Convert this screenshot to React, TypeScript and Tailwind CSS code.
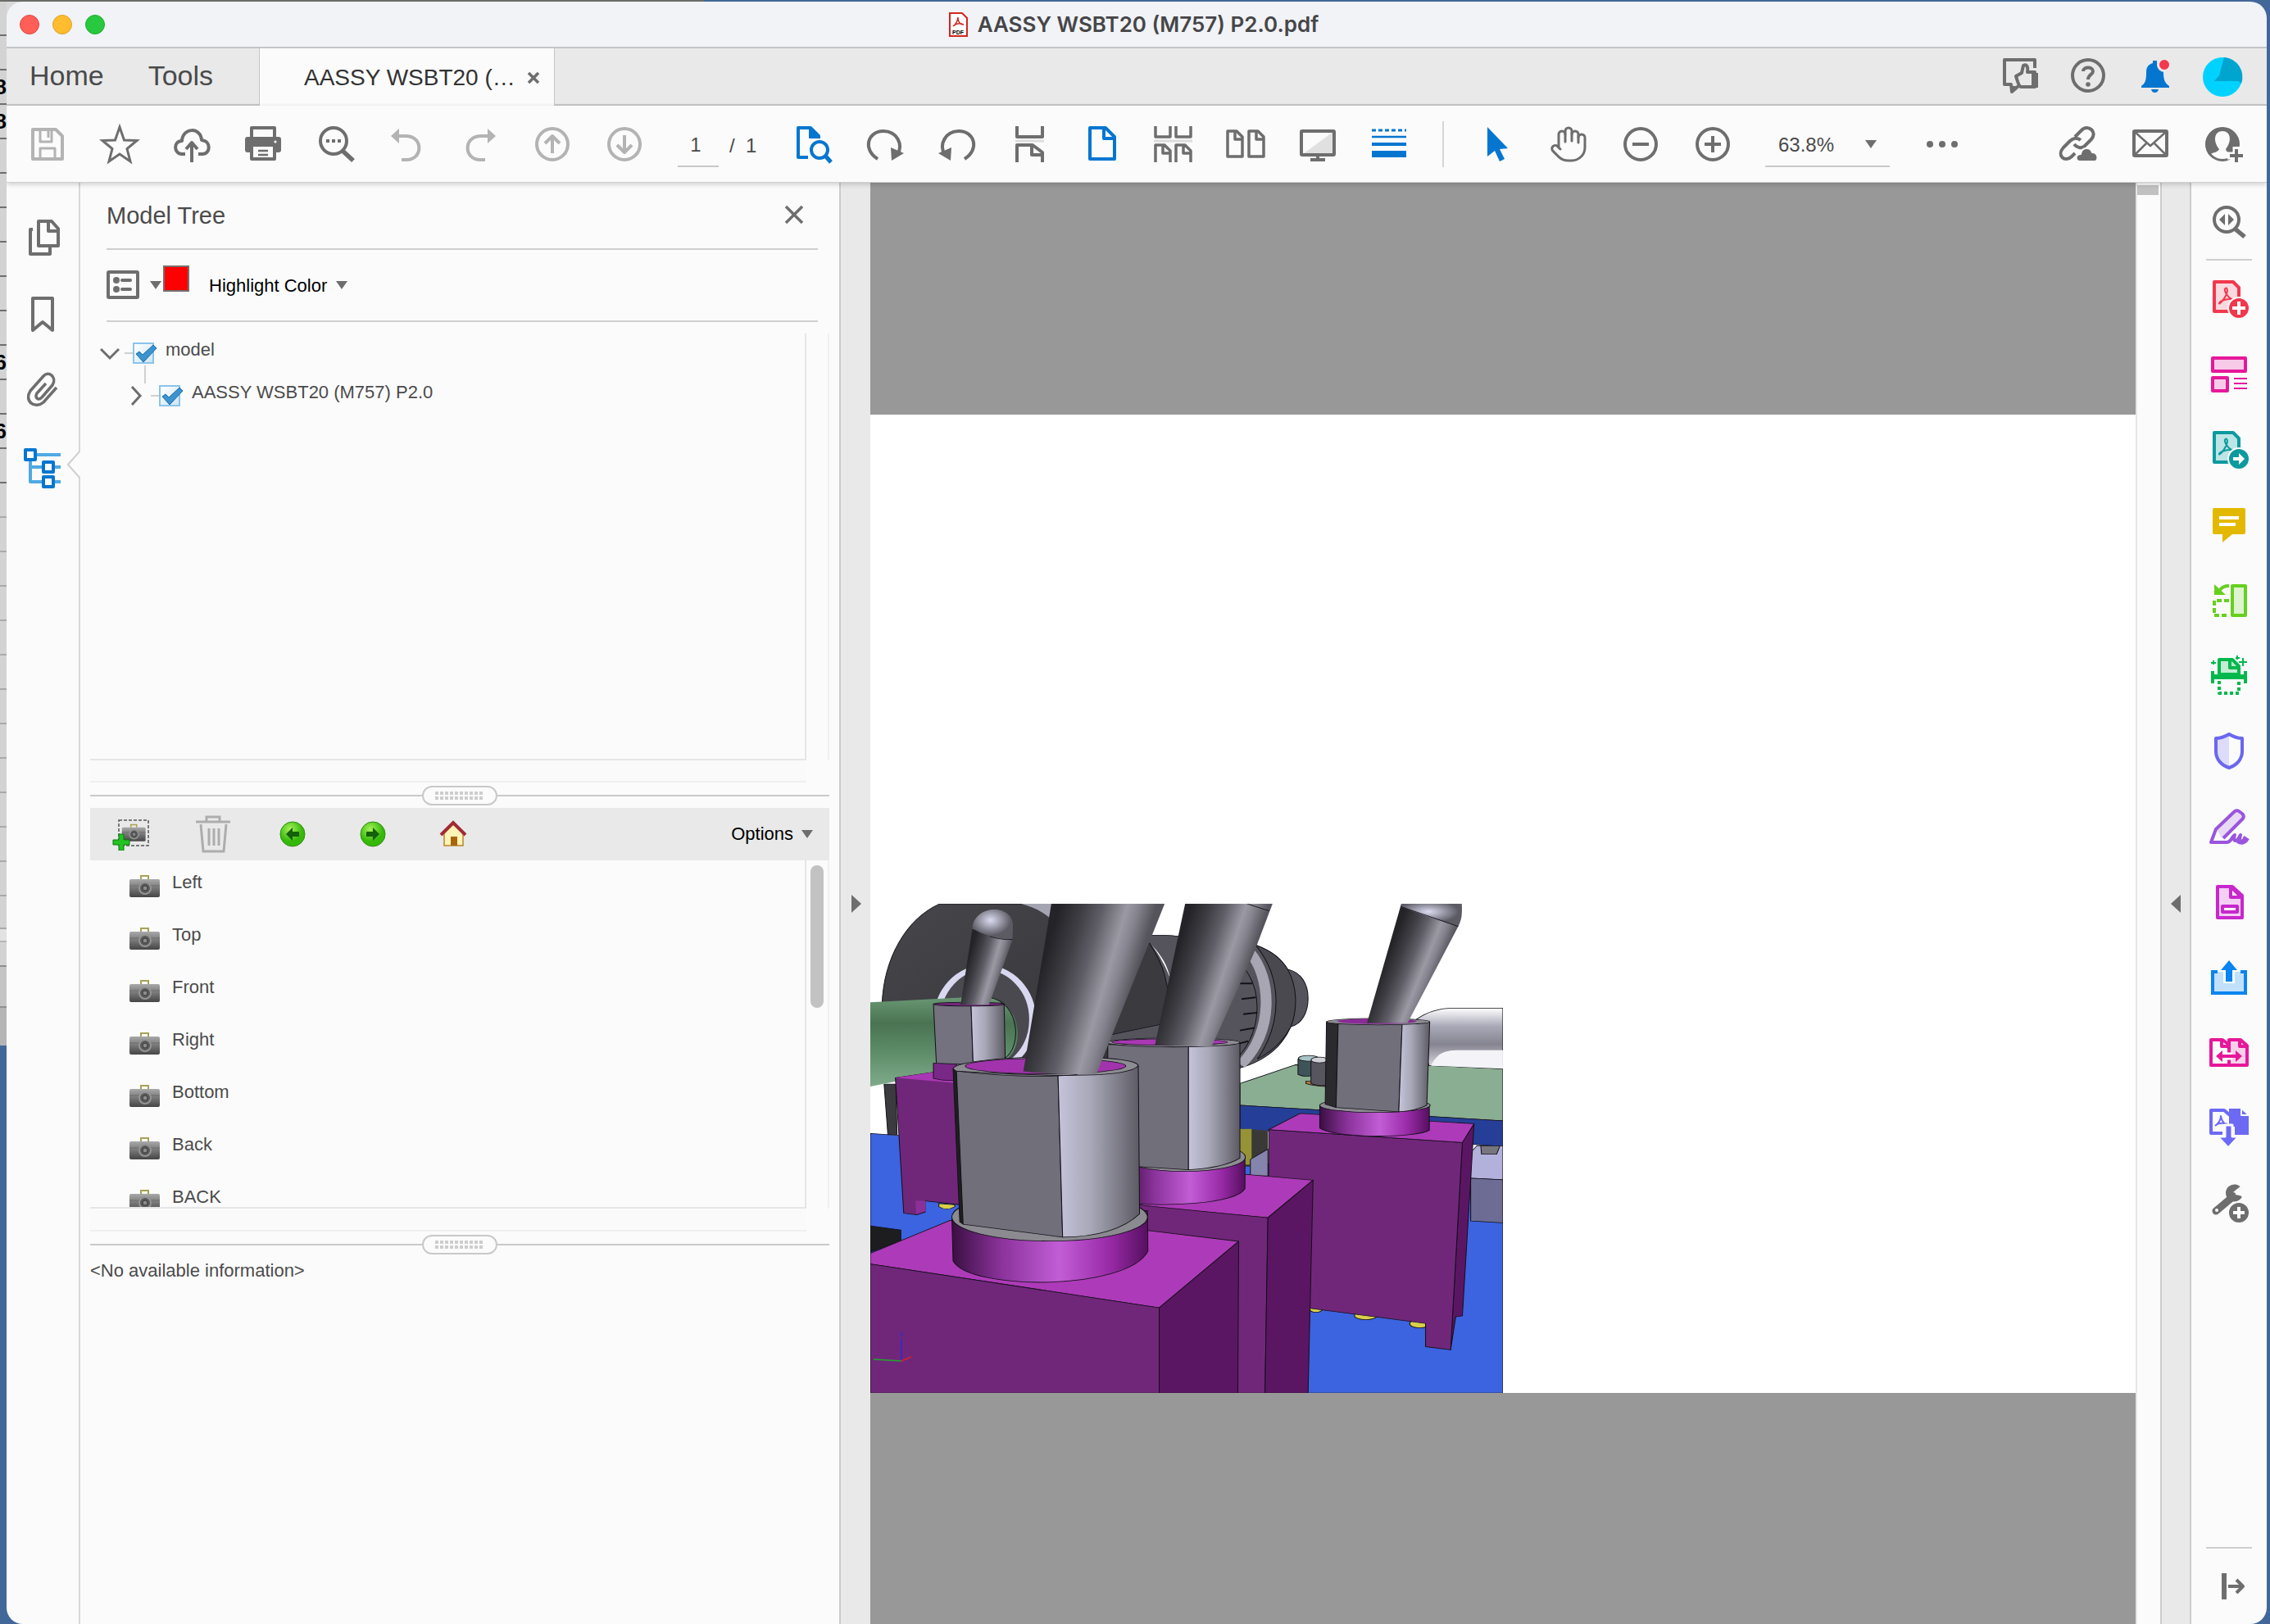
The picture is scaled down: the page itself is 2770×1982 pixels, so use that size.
import type { ReactNode } from "react";
import { Hand } from "lucide-react";

const GRAY = "#6e6e6e";
const MUTED = "#b3b3b3";
const BLUE = "#0576d0";

type IconProps = {
  children: ReactNode;
  color?: string;
  width?: number;
};

function Icon({ children, color = GRAY, width = 4 }: IconProps) {
  return (
    <svg
      viewBox="0 0 48 48"
      className="size-12 shrink-0 overflow-visible"
      fill="none"
      stroke={color}
      strokeWidth={width}
      strokeLinejoin="round"
      aria-hidden="true"
    >
      {children}
    </svg>
  );
}

function Caret() {
  return (
    <svg viewBox="0 0 14 10" className="h-[10px] w-[14px] shrink-0" aria-hidden="true">
      <path d="M0 0H14L7 10z" fill={GRAY} />
    </svg>
  );
}

const acrobatMark =
  "M11 30c4-3 9-10 10-16 0-5-4-4-3 0 1 5 7 11 13 12M11 30c-1-3 8-7 18-6";

const fileTools = [
  {
    label: "Save",
    icon: (
      <Icon color={MUTED}>
        <path d="M6 6H34L42 14V42H6z" />
        <path d="M15 6V21H29V6M15 42V29H33V42" strokeWidth="3" />
        <path d="M25 8V16" strokeWidth="3" />
      </Icon>
    ),
  },
  {
    label: "Star this file",
    icon: (
      <Icon width={3}>
        <path
          d="M24 3L29.5 19L45 19.5L33 29.5L37 45L24 36L11 45L15 29.5L3 19.5L18.5 19z"
          strokeLinejoin="miter"
        />
      </Icon>
    ),
  },
  {
    label: "Upload to cloud",
    icon: (
      <Icon>
        <path d="M16 36H12C2 36 1 20 12 20C13 3 35 3 36 19C48 20 47 36 37 36H32" />
        <path d="M24 46V23M17 30L24 22L31 30" />
      </Icon>
    ),
  },
  {
    label: "Print",
    icon: (
      <Icon>
        <rect x="1" y="15" width="44" height="19" rx="3" fill={GRAY} stroke="none" />
        <rect x="9" y="4" width="28" height="13" fill="#fbfbfb" />
        <rect x="9" y="25" width="28" height="17" fill="#fbfbfb" />
        <path d="M17 32H29M17 37H29" strokeWidth="2.5" />
        <circle cx="38" cy="21" r="1.6" fill="#fbfbfb" stroke="none" />
      </Icon>
    ),
  },
  {
    label: "Find text",
    icon: (
      <Icon>
        <circle cx="21" cy="20" r="16" />
        <path d="M32 32L45 44" strokeWidth="5.5" />
        <path d="M12 20h4M19 20h4M26 20h4" />
      </Icon>
    ),
  },
  {
    label: "Undo",
    icon: (
      <Icon color={MUTED}>
        <path d="M12 14H22C43 15 42 43 22 43H16" />
        <path d="M3 14L13 5V23z" fill={MUTED} stroke="none" />
      </Icon>
    ),
  },
  {
    label: "Redo",
    icon: (
      <Icon color={MUTED}>
        <path d="M35 14H24C3 15 4 43 24 43H30" />
        <path d="M43 14L33 5V23z" fill={MUTED} stroke="none" />
      </Icon>
    ),
  },
  {
    label: "Previous page",
    icon: (
      <Icon color={MUTED}>
        <circle cx="24" cy="24" r="19" />
        <path d="M24 35V14M15 23L24 14L33 23" />
      </Icon>
    ),
  },
  {
    label: "Next page",
    icon: (
      <Icon color={MUTED}>
        <circle cx="24" cy="24" r="19" />
        <path d="M24 13V34M15 25L24 34L33 25" />
      </Icon>
    ),
  },
];

const viewTools = [
  {
    label: "Find in page",
    icon: (
      <Icon color={BLUE}>
        <path d="M18 40H6V4H21L31 14V17" />
        <path d="M20 4V16H32z" fill={BLUE} strokeWidth="2" />
        <circle cx="32" cy="31" r="10" />
        <path d="M39 38L46 46" strokeWidth="5" />
      </Icon>
    ),
  },
  {
    label: "Rotate clockwise",
    icon: (
      <Icon>
        <path d="M15 42C-4 30 3 8 22 8C38 8 47 24 39 37" />
        <path d="M47 35L32 44L31 28z" fill={GRAY} stroke="none" />
      </Icon>
    ),
  },
  {
    label: "Rotate counterclockwise",
    icon: (
      <Icon>
        <path d="M33 42C52 30 45 8 26 8C10 8 1 24 9 37" />
        <path d="M1 35L16 44L17 28z" fill={GRAY} stroke="none" />
      </Icon>
    ),
  },
  {
    label: "Fit width scrolling",
    icon: (
      <Icon>
        <path d="M9 2V15H40V2M9 46V25H28L40 34V46M27 25V37H40" />
        <path d="M7 20H42" stroke="#dcdcdc" strokeWidth="3" />
      </Icon>
    ),
  },
  {
    label: "Single page view",
    icon: (
      <Icon color={BLUE}>
        <path d="M10 4H29L40 15V42H10z" />
        <path d="M27 5V17H39" />
      </Icon>
    ),
  },
  {
    label: "Two page scrolling",
    icon: (
      <Icon width={3.5}>
        <path d="M2 2V15H20V2M27 2V15H45V2" />
        <path d="M2 46V25H13L20 32V46M11 25V35H20M27 46V25H38L45 32V46M36 25V35H45" />
        <path d="M0 20H47" stroke="#dcdcdc" strokeWidth="3" />
      </Icon>
    ),
  },
  {
    label: "Two page view",
    icon: (
      <Icon width={3.5}>
        <path d="M2 8H13L20 15V39H2zM28 8H39L46 15V39H28z" />
        <path d="M11 8V18H20M37 8V18H46" />
      </Icon>
    ),
  },
  {
    label: "Read mode",
    icon: (
      <Icon>
        <path d="M44 8V36H6z" fill="#e0e0e0" stroke="none" />
        <rect x="4" y="8" width="40" height="29" rx="1" />
        <path d="M24 38V42M15 43H33" />
      </Icon>
    ),
  },
  {
    label: "Line weights",
    icon: (
      <Icon color={BLUE}>
        <path d="M2 7H44" strokeWidth="3" strokeDasharray="5 3" />
        <path d="M2 15H44" strokeWidth="2.5" />
        <path d="M2 24H44" />
        <path d="M2 36H44" strokeWidth="8" />
      </Icon>
    ),
  },
];

const pointerTools = [
  {
    label: "Select",
    icon: (
      <Icon color={BLUE}>
        <path
          d="M13 3L38 29L28 30L34 42L28 45L22 32L13 39z"
          fill={BLUE}
          stroke="none"
        />
      </Icon>
    ),
  },
  {
    label: "Pan",
    icon: <Hand className="size-12" color={GRAY} strokeWidth={1.5} aria-hidden="true" />,
  },
  {
    label: "Zoom out",
    icon: (
      <Icon>
        <circle cx="24" cy="24" r="19" />
        <path d="M14 24H34" />
      </Icon>
    ),
  },
  {
    label: "Zoom in",
    icon: (
      <Icon>
        <circle cx="24" cy="24" r="19" />
        <path d="M14 24H34M24 14V34" />
      </Icon>
    ),
  },
];

const shareTools = [
  {
    label: "Share link",
    icon: (
      <Icon>
        <path d="M20 15L28 7C36 -1 48 9 40 18L32 26C28 30 22 28 19 24" strokeLinecap="butt" />
        <path d="M27 19C22 15 17 17 14 20L6 28C-3 38 8 47 16 39L20 35" />
        <path
          d="M26 45C20 45 20 36 27 36C28 27 39 27 41 34C49 34 49 45 44 45z"
          fill={GRAY}
          stroke="#fbfbfb"
          strokeWidth="2"
        />
      </Icon>
    ),
  },
  {
    label: "Send by email",
    icon: (
      <Icon>
        <rect x="4" y="8" width="40" height="30" rx="1" />
        <path d="M5 9L24 26L43 9M5 37L19 23M43 37L29 23" strokeWidth="2.5" />
      </Icon>
    ),
  },
  {
    label: "Invite people",
    icon: (
      <Icon>
        <circle cx="24" cy="24" r="19.5" strokeWidth="3" />
        <path
          d="M24 3.500A20.500 20.500 0 0 0 8 37C11 34 19 34 20 30C12 20 14 8 24 8S36 20 28 30C29 34 31 34 34 35L43 30A20.500 20.500 0 0 0 24 3.500z"
          fill={GRAY}
          stroke="none"
        />
        <path d="M41 27V49M30 38H52" stroke="#fbfbfb" strokeWidth="9" />
        <path d="M41 30V46M33 38H49" />
      </Icon>
    ),
  },
];

const sideTools = [
  {
    label: "Create PDF",
    icon: (
      <Icon color="#f1384e">
        <path d="M5 3H28L35 10V39H5z" fill="#fad9de" />
        <path d={acrobatMark} strokeWidth="2" />
        <circle cx="35" cy="35" r="13" fill="#f1384e" stroke="#fbfbfb" strokeWidth="2" />
        <path d="M35 27V43M27 35H43" stroke="#fff" />
      </Icon>
    ),
  },
  {
    label: "Organize Pages",
    icon: (
      <Icon color="#e6189a">
        <rect x="3" y="4" width="40" height="16" fill="#f7cbe8" />
        <rect x="3" y="28" width="18" height="16" fill="#f7cbe8" />
        <path d="M29 29H45M29 35H45M29 41H45" strokeWidth="2" />
      </Icon>
    ),
  },
  {
    label: "Export PDF",
    icon: (
      <Icon color="#0d9a9f">
        <path d="M5 3H28L35 10V39H5z" fill="#bce5e6" />
        <path d={acrobatMark} strokeWidth="2" />
        <circle cx="35" cy="35" r="13" fill="#0d9a9f" stroke="#fbfbfb" strokeWidth="2" />
        <path d="M28 35H36" stroke="#fff" />
        <path d="M35 28L42 35L35 42z" fill="#fff" stroke="none" />
      </Icon>
    ),
  },
  {
    label: "Comment",
    icon: (
      <Icon color="#e3b900">
        <path
          d="M5 3H41Q43 3 43 5V33Q43 35 41 35H27L15 45V35H5Q3 35 3 33V5Q3 3 5 3z"
          fill="#e3b900"
          stroke="none"
        />
        <path d="M11 15H35M11 23H31" stroke="#fff" />
      </Icon>
    ),
  },
  {
    label: "Combine Files",
    icon: (
      <Icon color="#66d01e">
        <rect x="27" y="6" width="16" height="36" fill="#def3cf" />
        <path d="M23 24H5V42H23" strokeDasharray="6 3" />
        <path d="M23 6C17 6 14 8 12 11" />
        <path d="M5 4V17H19z" fill="#66d01e" stroke="none" />
      </Icon>
    ),
  },
  {
    label: "Scan & OCR",
    icon: (
      <Icon color="#00b84c">
        <path d="M11 22V4H27L35 12V22z" fill="#c4ecd3" />
        <path d="M24 5V14H34" />
        <path d="M3 18V33M43 18V33" />
        <path d="M1 25H45" strokeWidth="6" />
        <path d="M11 30V45H35V30" strokeDasharray="4 3" />
        <path d="M40 2V12M35 7H45M4 5V10M1 8H7M33 -1V4M31 2H36" strokeWidth="2" />
      </Icon>
    ),
  },
  {
    label: "Protect",
    icon: (
      <Icon color="#6a67ee">
        <path d="M23 4V44C12 39 7 33 7 24V9C14 8 19 7 23 4z" fill="#dcdbf9" stroke="none" />
        <path d="M23 3C28 6 34 8 39 8V24C39 34 32 41 23 44C14 41 7 34 7 24V8C12 8 18 6 23 3z" />
      </Icon>
    ),
  },
  {
    label: "Fill & Sign",
    icon: (
      <Icon color="#9a55dc">
        <path d="M14 38L40 12L32 5L8 27z" fill="#e8d9f6" stroke="none" />
        <path d="M16 38L40 14Q42 11 39 8L35 5Q32 3 29 6L7 27L1 43H20C26 43 26 36 30 34C28 41 30 43 34 39L37 34C35 42 37 44 41 40L43 36M33 42C40 46 44 42 46 38" />
      </Icon>
    ),
  },
  {
    label: "Prepare Form",
    icon: (
      <Icon color="#c827cd">
        <path d="M9 5H27L39 16V43H9z" fill="#f2cff3" />
        <path d="M25 5V18H38z" fill="#fbfbfb" />
        <rect x="15" y="29" width="18" height="7" fill="#fff" />
      </Icon>
    ),
  },
  {
    label: "Share",
    icon: (
      <Icon color="#0a84f0">
        <path d="M9 17H3V43H43V17H37" fill="#c1e1fb" strokeLinejoin="miter" />
        <path d="M16 12V31H30V12z" fill="#fbfbfb" stroke="none" />
        <path d="M23 3L33 15H27V29H19V15H13z" fill="#0a84f0" stroke="none" />
      </Icon>
    ),
  },
  {
    label: "Compare Files",
    icon: (
      <Icon color="#e6189a">
        <path d="M1 8H15L23 14V39H1z" />
        <path d="M23 8H37L45 15V39H23z" fill="#f9d0e9" />
        <path d="M14 8V16H23M36 8V16H45" />
        <path d="M19 28H27" stroke="#fff" strokeWidth="9" />
        <path d="M12 28H34" />
        <path d="M7 28L15 21V35zM39 28L31 21V35z" fill="#e6189a" stroke="none" />
      </Icon>
    ),
  },
  {
    label: "Convert",
    icon: (
      <Icon color="#6c6af4">
        <path d="M15 30H1V2H17L24 8" />
        <path d="M23 0H37L47 9V32H30V22H23z" fill="#6c6af4" stroke="none" />
        <path d="M38 0V8H47" stroke="#fbfbfb" strokeWidth="2" />
        <path d="M6 21C10 18 13 13 13 9C14 16 18 20 21 19M6 21C10 17 15 17 21 19" strokeWidth="2" />
        <path d="M18 20V34H9L22 48L35 34H27V20z" fill="#6c6af4" stroke="#fbfbfb" strokeWidth="3" />
      </Icon>
    ),
  },
  {
    label: "More Tools",
    icon: (
      <Icon>
        <path d="M7 33L26 17" strokeWidth="9" strokeLinecap="round" />
        <path d="M37 6A9 9 0 1 0 37 16L29 14L30 8z" fill={GRAY} strokeWidth="3" />
        <path d="M28 10L38 2L40 14z" fill="#fbfbfb" stroke="none" />
        <circle cx="8" cy="32" r="2" fill="#fff" stroke="none" />
        <circle cx="35" cy="35" r="13" fill={GRAY} stroke="#fbfbfb" strokeWidth="2" />
        <path d="M35 28V42M28 35H42" stroke="#fff" />
      </Icon>
    ),
  },
];

const views = ["Left", "Top", "Front", "Right", "Bottom", "Back", "BACK"];

function ToolButton({ label, children }: { label: string; children: ReactNode }) {
  return (
    <button type="button" aria-label={label} className="flex w-[88px] justify-center">
      {children}
    </button>
  );
}

function Desktop() {
  const digits: Record<number, string> = { 2: "8", 3: "8", 10: "6", 12: "6" };
  return (
    <div className="w-2 shrink-0 overflow-hidden" aria-hidden="true">
      {Array.from({ length: 26 }, (_, i) => (
        <div
          key={i}
          className={`flex h-[42px] items-center justify-end border-b-2 bg-[#d3d3d3] text-[26px] font-bold text-black ${
            i < 14 ? "border-[#6f6f6f]" : "border-[#a9a9a9]"
          }`}
        >
          {digits[i]}
        </div>
      ))}
      <div className="h-10 border-b-2 border-[#a9a9a9] bg-[#d3d3d3]" />
      <div className="h-4 border-b-2 border-[#b5b5b5] bg-[#e2e2e2]" />
      <div className="h-[30px] border-b-2 border-[#8f8f8f] bg-[#d3d3d3]" />
      <div className="h-[50px] border-b-2 border-[#8f8f8f] bg-[#c4c4c4]" />
      <div className="h-[46px] bg-[#b5b5b5]" />
    </div>
  );
}

function TitleBar() {
  return (
    <header className="flex h-[57px] items-center border-b-2 border-[#c3c5c9] bg-[#f1f3f7] px-4">
      <div className="flex flex-1 gap-4">
        <button type="button" aria-label="Close" className="size-6 rounded-full border border-[#e2463f] bg-[#ff5f57]" />
        <button type="button" aria-label="Minimize" className="size-6 rounded-full border border-[#e0a028] bg-[#febc2e]" />
        <button type="button" aria-label="Zoom" className="size-6 rounded-full border border-[#1dad2b] bg-[#28c840]" />
      </div>
      <div className="flex items-center gap-3 pr-2">
        <svg viewBox="0 0 24 30" className="h-[30px] w-6" aria-hidden="true">
          <path d="M2 1H17L23 7V29H2z" fill="#fff" stroke="#d3261c" strokeWidth="2" />
          <path d="M6 17C9 15 12 10 12 6C12 12 15 15 19 15M6 17C9 14 14 13 19 15" fill="none" stroke="#d3261c" strokeWidth="1.5" />
          <text x="12" y="27" textAnchor="middle" fontSize="7" fontWeight="bold" fontFamily="Liberation Sans, sans-serif">
            PDF
          </text>
        </svg>
        <h1 className="font-['Inter',sans-serif] text-[26px] leading-8 font-semibold text-[#464648]">
          AASSY WSBT20 (M757) P2.0.pdf
        </h1>
      </div>
      <div className="flex-1" />
    </header>
  );
}

function TabBar() {
  return (
    <nav className="flex h-[70px] bg-[#e9e9e9] text-[#4a4a4a]">
      <div className="flex w-[309px] items-center gap-[54px] border-r border-b-2 border-[#c6c6c6] pb-0.5 pl-7 text-[34px] leading-10">
        <button type="button">Home</button>
        <button type="button">Tools</button>
      </div>
      <div className="flex w-[359px] items-center justify-between bg-[#fbfbfb] pt-0.5 pr-4 pl-[54px]">
        <button type="button" className="text-[28px] leading-10 text-[#323232]">
          AASSY WSBT20 (…
        </button>
        <button type="button" aria-label="Close tab">
          <svg viewBox="0 0 18 18" className="size-[18px]" aria-hidden="true">
            <path d="M3 3L15 15M15 3L3 15" stroke={GRAY} strokeWidth="3.500" />
          </svg>
        </button>
      </div>
      <div className="flex flex-1 items-center justify-end gap-[34px] border-b-2 border-l border-[#c6c6c6] pr-[30px]">
        <button type="button" aria-label="Give feedback">
          <Icon>
            <path d="M41 14V4H4V34H12L13 43L21 36" />
            <path d="M12 36H21L13 44z" fill={GRAY} stroke="none" />
            <path
              d="M18 24L25 20L27 11C31 9 33 12 32 19H41V37H24C21 36 20 30 18 24z"
              fill="#e9e9e9"
            />
            <path d="M37 20H45V38H37z" fill={GRAY} stroke="none" />
          </Icon>
        </button>
        <button type="button" aria-label="Help">
          <Icon>
            <circle cx="24" cy="23" r="19" />
            <path d="M18 18C18 12 30 12 30 18C30 22 24 22 24 28" />
            <circle cx="24" cy="34" r="2.8" fill={GRAY} stroke="none" />
          </Icon>
        </button>
        <button type="button" aria-label="Notifications">
          <Icon color={BLUE}>
            <path
              d="M21 5H26V8C34 10 34 14 34 20C34 30 37 33 41 36V38H7V36C11 33 13 30 13 20C13 13 15 10 21 8z"
              fill={BLUE}
              stroke="none"
            />
            <path d="M19 40H28Q27 44 23.500 44T19 40z" fill={BLUE} stroke="none" />
            <circle cx="35" cy="10" r="7.500" fill="#f5384f" stroke="#e9e9e9" strokeWidth="3" />
          </Icon>
        </button>
        <button type="button" aria-label="Account">
          <Icon>
            <circle cx="24" cy="25" r="24" fill="#00d2ff" stroke="none" />
            <path d="M26 1A24 24 0 0 1 47 33L43 30H14L20 23z" fill="#00a5cf" stroke="none" />
          </Icon>
        </button>
      </div>
    </nav>
  );
}

function Toolbar() {
  return (
    <div className="relative z-10 flex h-[94px] items-center border-b border-[#d0d0d0] bg-[#fbfbfb] pl-[6px] pr-[10px] text-2xl text-[#4a4a4a] shadow-[0_2px_6px_rgba(0,0,0,0.18)]">
      {fileTools.map((tool) => (
        <ToolButton key={tool.label} label={tool.label}>
          {tool.icon}
        </ToolButton>
      ))}
      <div className="flex w-[142px] items-center gap-[13px] pl-[21px]">
        <input
          aria-label="Page number"
          defaultValue="1"
          className="h-14 w-[50px] border-b-2 border-[#c8c8c8] pt-1 pr-1.5 text-center"
        />
        <span className="pt-1">/&nbsp; 1</span>
      </div>
      {viewTools.map((tool) => (
        <ToolButton key={tool.label} label={tool.label}>
          {tool.icon}
        </ToolButton>
      ))}
      <div className="mr-5 ml-5 h-14 w-0.5 bg-[#d6d6d6]" />
      {pointerTools.map((tool) => (
        <ToolButton key={tool.label} label={tool.label}>
          {tool.icon}
        </ToolButton>
      ))}
      <div className="relative ml-5 flex items-center">
        <select
          aria-label="Zoom level"
          className="h-14 w-[152px] appearance-none border-b-2 border-[#c8c8c8] pt-1 pl-4"
        >
          <option>63.8%</option>
        </select>
        <span className="pointer-events-none absolute right-4">
          <Caret />
        </span>
      </div>
      <div className="ml-5">
        <ToolButton label="More">
          <Icon>
            <circle cx="9" cy="24" r="4" fill={GRAY} stroke="none" />
            <circle cx="24" cy="24" r="4" fill={GRAY} stroke="none" />
            <circle cx="39" cy="24" r="4" fill={GRAY} stroke="none" />
          </Icon>
        </ToolButton>
      </div>
      <div className="ml-auto flex">
        {shareTools.map((tool) => (
          <ToolButton key={tool.label} label={tool.label}>
            {tool.icon}
          </ToolButton>
        ))}
      </div>
    </div>
  );
}

function LeftRail() {
  return (
    <aside className="relative flex w-[90px] shrink-0 flex-col items-center gap-[45px] border-r-2 border-[#d8d8d8] bg-[#fbfbfb] pt-11">
      <button type="button" aria-label="Page thumbnails">
        <Icon>
          <path d="M12 13H9V43H33V35" />
          <path d="M19 3H35L43 12V33H19zM31 3V15H43" />
        </Icon>
      </button>
      <button type="button" aria-label="Bookmarks">
        <Icon>
          <path d="M12 4H36V43L24 33L12 43z" />
        </Icon>
      </button>
      <button type="button" aria-label="Attachments">
        <Icon>
          <path
            d="M28 15L17 27C14 33 19 36 23 32L36 17C42 7 31 -1 25 6L9 24C1 36 14 47 25 38L41 20"
            strokeWidth="3.500"
          />
        </Icon>
      </button>
      <button type="button" aria-label="Model Tree">
        <Icon color="#4fa9e3">
          <path d="M16 9H46M9 14V42H46M9 24H46" />
          <rect x="3" y="3" width="12" height="12" fill="#fff" stroke={BLUE} />
          <rect x="25" y="18" width="12" height="12" fill="#fff" stroke={BLUE} />
          <rect x="25" y="36" width="12" height="12" fill="#fff" stroke={BLUE} />
        </Icon>
      </button>
      <svg viewBox="0 0 16 34" className="absolute top-[327px] -right-0.5 h-[34px] w-4" aria-hidden="true">
        <path d="M16 0L1 17L16 34" fill="#fbfbfb" stroke="#cfcfcf" strokeWidth="2" />
      </svg>
    </aside>
  );
}

type TreeRowProps = {
  id: string;
  label: string;
  open?: boolean;
  nested?: boolean;
};

function TreeRow({ id, label, open, nested }: TreeRowProps) {
  return (
    <li className={`flex h-12 items-center ${nested ? "pl-11" : "pl-3"}`}>
      <button type="button" aria-label={`Toggle ${label}`} className="mr-1.5">
        <svg viewBox="0 0 24 24" className="size-6" fill="none" stroke={GRAY} strokeWidth="3" aria-hidden="true">
          <path d={open ? "M1 7L12 18L23 7" : "M7 1L17 12L7 23"} />
        </svg>
      </button>
      <span className="h-0.5 w-2.5 bg-[#d0d0d0]" />
      <span className="relative size-[26px] shrink-0">
        <input
          id={id}
          type="checkbox"
          defaultChecked
          className="block size-[26px] appearance-none border-2 border-[#8cc4ea] bg-linear-to-br from-white to-[#cfe6f7]"
        />
        <svg viewBox="0 0 30 26" className="pointer-events-none absolute top-0 left-0 h-[26px] w-[30px]" aria-hidden="true">
          <path d="M4 14L8 11L12 15L25 3L29 7L13 24z" fill="#3b93cf" stroke="#1f6ca6" />
        </svg>
        {open && <span className="absolute top-7 left-[14px] h-[22px] w-0.5 bg-[#d0d0d0]" />}
      </span>
      <label htmlFor={id} className="pb-2 pl-[14px]">
        {label}
      </label>
    </li>
  );
}

function Camera() {
  return (
    <>
      <path d="M15 6V2H24V6" fill="none" stroke="#a8a255" strokeWidth="2" />
      <rect x="1" y="6" width="37" height="22" rx="2" fill="url(#camera-body)" />
      <path d="M1 14H38" stroke="#6a6a6a" />
      <circle cx="20" cy="17" r="7" fill="#5a5a5a" stroke="#959595" strokeWidth="2" />
      <circle cx="20" cy="17" r="3" fill="#8b8b8b" stroke="#3a3a3a" />
    </>
  );
}

function Splitter() {
  return (
    <div className="flex items-center" role="separator" aria-orientation="horizontal">
      <div className="h-0.5 flex-1 bg-[#c9c9c9]" />
      <div className="flex h-6 w-[92px] items-center justify-center rounded-full border-2 border-[#c9c9c9] bg-[#fbfbfb]">
        <svg viewBox="0 0 60 10" className="h-[10px] w-[60px]" aria-hidden="true">
          <path d="M0 2H60M0 8H60" stroke="#cdcdcd" strokeWidth="4" strokeDasharray="4 2" />
        </svg>
      </div>
      <div className="h-0.5 flex-1 bg-[#c9c9c9]" />
    </div>
  );
}

function ArrowBadge({ left }: { left?: boolean }) {
  return (
    <>
      <circle cx="20" cy="20" r="15" fill="url(#green-ball)" stroke="#2c8f0c" />
      <path
        d={left ? "M12 20L20 12V17H28V23H20V28z" : "M28 20L20 12V17H12V23H20V28z"}
        fill="#15600a"
      />
    </>
  );
}

function ModelTreePanel() {
  return (
    <section className="w-[926px] shrink-0 bg-[#fbfbfb] text-[22px] leading-7 text-[#4b4b4b]">
      <div className="mr-[26px] ml-8 flex h-[82px] items-center justify-between border-b-2 border-[#cfcfcf] pr-4">
        <h2 className="text-[29px] leading-9">Model Tree</h2>
        <button type="button" aria-label="Close panel" className="pb-0.5">
          <svg viewBox="0 0 26 26" className="size-[26px]" aria-hidden="true">
            <path d="M3 3L23 23M23 3L3 23" stroke={GRAY} strokeWidth="3.500" />
          </svg>
        </button>
      </div>
      <div className="mr-[26px] ml-8 flex h-[88px] items-center border-b-2 border-[#cfcfcf]">
        <button type="button" aria-label="Tree options" className="flex items-center gap-[11px]">
          <svg viewBox="0 0 42 36" className="h-9 w-[42px]" fill="none" stroke={GRAY} strokeWidth="4" aria-hidden="true">
            <rect x="2" y="2" width="36" height="31" rx="1" />
            <path d="M19 12H29M19 23H29" strokeLinecap="round" />
            <circle cx="12" cy="12" r="4" fill={GRAY} stroke="none" />
            <circle cx="12" cy="23" r="4" fill={GRAY} stroke="none" />
          </svg>
          <Caret />
        </button>
        <button type="button" className="flex items-center text-black">
          <span className="mr-6 mb-4 ml-0.5 size-8 border-2 border-[#7b6b6b] bg-[#ff0000]" />
          <span className="mr-[11px] pt-0.5">Highlight Color</span>
          <Caret />
        </button>
      </div>

      <div className="px-3">
        <div className="mt-[14px] flex h-[521px]">
          <ul className="flex-1 space-y-1 border-r-2 border-b-2 border-[#e6e6e6]">
            <TreeRow id="node-model" label="model" open />
            <TreeRow id="node-assembly" label="AASSY WSBT20 (M757) P2.0" nested />
          </ul>
          <div className="w-7 border-r-2 border-[#f0f0f0]" />
        </div>
        <div className="mr-7 mb-1 h-[27px] border-b-2 border-[#efefef] bg-[#fafafa]" />
        <Splitter />

        <div className="mt-[3px] flex h-16 items-center bg-[#e9e9e9] pr-5 pl-0.5">
          <button type="button" aria-label="Create view" className="flex w-[98px] justify-center">
            <svg viewBox="0 0 48 40" className="h-10 w-12" aria-hidden="true">
              <rect x="8" y="3" width="36" height="31" fill="none" stroke="#555" strokeWidth="1.500" strokeDasharray="4 2" />
              <g transform="translate(11 7) scale(.78)">
                <Camera />
              </g>
              <path d="M8 20H14V27H21V33H14V40H8V33H1V27H8z" fill="#22c322" stroke="#0b7a0b" />
            </svg>
          </button>
          <button type="button" aria-label="Delete view" className="flex w-[98px] justify-center">
            <svg viewBox="0 0 44 48" className="h-12 w-11" fill="none" stroke="#adadad" strokeWidth="3" aria-hidden="true">
              <path d="M15 8V3H31V8M2 9H44M8 12L11 45H36L39 12M18 17V38M24 17V38M30 17V38" />
            </svg>
          </button>
          <button type="button" aria-label="Previous view" className="flex w-[98px] justify-center">
            <svg viewBox="0 0 40 40" className="size-10" aria-hidden="true">
              <ArrowBadge left />
            </svg>
          </button>
          <button type="button" aria-label="Next view" className="flex w-[98px] justify-center">
            <svg viewBox="0 0 40 40" className="size-10" aria-hidden="true">
              <ArrowBadge />
            </svg>
          </button>
          <button type="button" aria-label="Default view" className="flex w-[98px] justify-center">
            <svg viewBox="0 0 40 40" className="size-10" aria-hidden="true">
              <path d="M9 19V34H32V19L20 8z" fill="#fff3b8" stroke="#b8862a" strokeWidth="1.500" />
              <path d="M5 21L20 6L35 21" fill="none" stroke="#a02a35" strokeWidth="4" />
              <path d="M17 34V23H25V34z" fill="#a8660c" />
            </svg>
          </button>
          <button type="button" className="ml-auto flex items-center gap-[10px] text-black">
            Options
            <Caret />
          </button>
        </div>

        <div className="flex h-[425px]">
          <ul className="flex-1 overflow-hidden border-r-2 border-b-2 border-[#e6e6e6]">
            {views.map((view) => (
              <li key={view} className="flex h-16 items-center gap-[13px] pl-[47px]">
                <svg viewBox="0 0 40 30" className="h-[30px] w-10 shrink-0" aria-hidden="true">
                  <Camera />
                </svg>
                <a href="#" className="pb-2.5">
                  {view}
                </a>
              </li>
            ))}
          </ul>
          <div className="flex w-7 justify-center border-r-2 border-[#f0f0f0] pt-1.5">
            <div className="h-[174px] w-4 rounded-full bg-[#c2c2c2]" />
          </div>
        </div>
        <div className="mr-7 mb-1 h-7 border-b-2 border-[#efefef] bg-[#fafafa]" />
        <Splitter />
        <p className="mt-1.5">&lt;No available information&gt;</p>
      </div>
    </section>
  );
}

function Gutter({ left }: { left?: boolean }) {
  return (
    <button
      type="button"
      aria-label={left ? "Open tools pane" : "Collapse navigation pane"}
      className={`flex w-[38px] shrink-0 items-center justify-center border-l-2 border-[#cccccc] bg-[#e9e9e9] ${
        left ? "border-r-2" : "pl-0.5"
      }`}
    >
      <svg viewBox="0 0 12 22" className="h-[22px] w-3" aria-hidden="true">
        <path d={left ? "M12 0V22L0 11z" : "M0 0V22L12 11z"} fill={GRAY} />
      </svg>
    </button>
  );
}

// Shading runs across each lever, from its left edge to its right one
function LeverShade({ id, from, to }: { id: string; from: number[]; to: number[] }) {
  return (
    <linearGradient id={id} gradientUnits="userSpaceOnUse" x1={from[0]} y1={from[1]} x2={to[0]} y2={to[1]}>
      <stop offset="0" stopColor="#242327" />
      <stop offset=".25" stopColor="#403f45" />
      <stop offset=".45" stopColor="#5f5e67" />
      <stop offset=".7" stopColor="#9b9aa4" />
      <stop offset=".82" stopColor="#85848e" />
      <stop offset="1" stopColor="#55545c" />
    </linearGradient>
  );
}

function Model() {
  return (
    <svg viewBox="0 0 772 597" className="h-1/2 w-1/2" role="img" aria-label="3D model">
      <defs>
        <LeverShade id="lever-far" from={[252, 230]} to={[340, 250]} />
        <LeverShade id="lever-front" from={[420, 290]} to={[640, 340]} />
        <LeverShade id="lever-middle" from={[738, 250]} to={[912, 295]} />
        <LeverShade id="lever-right" from={[1248, 230]} to={[1376, 270]} />
        <linearGradient id="facet">
          <stop offset="0" stopColor="#c4c3da" />
          <stop offset=".4" stopColor="#a9a8b8" />
          <stop offset="1" stopColor="#5c5b64" />
        </linearGradient>
        <linearGradient id="collar">
          <stop offset="0" stopColor="#3a0f42" />
          <stop offset=".25" stopColor="#8a329a" />
          <stop offset=".55" stopColor="#c25dd6" />
          <stop offset=".8" stopColor="#9a2ba8" />
          <stop offset="1" stopColor="#560f60" />
        </linearGradient>
        <linearGradient id="tube" x2="0" y2="1">
          <stop offset="0" stopColor="#6a9874" />
          <stop offset=".3" stopColor="#4a7352" />
          <stop offset=".6" stopColor="#5c8b67" />
          <stop offset="1" stopColor="#7fab8a" />
        </linearGradient>
        <linearGradient id="disc" x2="1" y2="1">
          <stop offset="0" stopColor="#47464b" />
          <stop offset="1" stopColor="#343338" />
        </linearGradient>
        <linearGradient id="pipe" x2="0" y2="1">
          <stop offset="0" stopColor="#ffffff" />
          <stop offset=".3" stopColor="#a9a9b8" />
          <stop offset=".6" stopColor="#858490" />
          <stop offset="1" stopColor="#e0e0e8" />
        </linearGradient>
        <radialGradient id="ball" cx=".45" cy=".35">
          <stop offset="0" stopColor="#dcdcf2" />
          <stop offset="1" stopColor="#5c5b64" />
        </radialGradient>
      </defs>
      <g transform="scale(.5102 .3954) translate(-24 -33)" stroke="#141018" strokeWidth="2" strokeLinejoin="round">
        {/* base board */}
        <path d="M24 742L90 748L900 835L1537 845V1543H24z" fill="#3c63e0" />
        <path d="M24 1027L97 1040V1075L24 1108z" fill="#1d1d1f" />

        {/* dial and knob behind the switches */}
        <path d="M57 590H85L88 745H66z" fill="#3b3a3f" />
        <path d="M52 345C56 200 110 80 190 33H640V545H60z" fill="url(#disc)" />
        <path d="M385 33H460V85C440 60 418 45 385 33z" fill="#a5a4b2" stroke="none" />
        <path
          d="M590 130H710C780 128 810 150 850 160H945C985 180 1005 200 1022 235C1055 245 1071 280 1071 325S1055 405 1030 412C1010 470 975 515 908 540L590 460z"
          fill="#55545d"
        />
        <path d="M590 130L692 155C725 220 742 280 738 400L590 440z" fill="#3b3a3f" />
        <path d="M697 160C722 195 735 225 741 262C730 225 715 190 697 160z" fill="#fff" stroke="none" />
        <path d="M945 160C985 180 1005 200 1022 235C1046 290 1046 360 1030 412C1010 460 985 490 950 512C1010 400 1010 260 945 160z" fill="#4a4950" />
        <path d="M930 180C985 260 990 430 910 530" fill="none" stroke="#a7a6b2" strokeWidth="26" />
        <path d="M917 230C962 300 960 420 908 500" fill="none" />
        <path
          d="M903 279H938M912 327L946 322M916 374L950 369M908 424L943 416M908 464L928 457M905 237H922"
          strokeWidth="5"
          fill="none"
        />
        <ellipse cx="298" cy="390" rx="114" ry="160" fill="#4a494f" />
        <ellipse cx="298" cy="390" rx="114" ry="160" fill="none" stroke="#d9d8f0" strokeWidth="16" />

        {/* green tube */}
        <path d="M24 337L250 322C400 290 395 490 345 515L24 597z" fill="url(#tube)" stroke="none" />
        <path d="M310 322C385 340 385 480 345 510" fill="none" />

        {/* far left switch */}
        <path d="M84 570L175 553L260 545V965L155 950V985L135 993L104 988z" fill="#70277a" />
        <path d="M84 570L175 553L260 545V590z" fill="#a838b3" stroke="none" />
        <path d="M132 950H156V982L134 990z" fill="#8d2f99" stroke="none" />
        <path d="M188 958V968Q206 982 226 968V962z" fill="#d9d04a" />
        <path d="M175 525V572Q200 580 230 578V525z" fill="#7a2888" />
        <path d="M175 342L265 346L270 530L182 525z" fill="#73727e" />
        <path d="M265 346L344 342L347 530H270z" fill="url(#facet)" />
        <ellipse cx="260" cy="343" rx="84" ry="6" fill="#70277a" />
        <path d="M268 110L240 345H308L364 145z" fill="url(#lever-far)" stroke="none" />
        <path d="M268 110C270 35 365 30 365 100L364 145Q310 140 268 110z" fill="url(#ball)" stroke="none" />
        <path d="M310 134Q335 145 364 143" fill="none" />

        {/* board on the right */}
        <path d="M1040 530L908 588V655L1537 703V542L1360 532z" fill="#8aae92" />
        <path d="M908 655L1537 703V782L908 728z" fill="#253f98" />
        <path d="M908 728L975 734V845H908z" fill="#3a3936" stroke="none" />
        <path d="M908 728H936V838H908z" fill="#959336" stroke="none" />
        <path d="M933 822L975 790V873H933z" fill="#8584ac" />
        <path d="M1460 800L1475 780H1537V885L1460 880z" fill="#b2b1dc" />
        <path d="M1460 880L1537 885V1018L1460 1012z" fill="#6d6c94" />
        <path d="M1484 780H1530L1522 806H1486z" fill="#77767f" />
        <path
          d="M1330 390C1360 362 1390 355 1420 355H1537V542L1360 532z"
          fill="url(#pipe)"
        />
        <path d="M1365 533C1380 492 1400 485 1430 485H1537V542z" fill="#f4f4f8" stroke="none" />
        <path d="M1066 580H1113V597Q1080 595 1066 588z" fill="#a97a3c" />
        <path d="M1047 512V560Q1065 570 1085 562V512z" fill="#3e5458" />
        <path d="M1078 515V588Q1095 598 1115 592V515z" fill="#57565f" />
        <ellipse cx="1072" cy="510" rx="24" ry="9" fill="#a8c4c6" />
        <ellipse cx="1098" cy="515" rx="20" ry="9" fill="#cfcfd8" />

        {/* right switch */}
        <ellipse cx="1090" cy="1283" rx="16" ry="11" fill="#d9d04a" />
        <ellipse cx="1209" cy="1304" rx="27" ry="13" fill="#d9d04a" />
        <ellipse cx="1338" cy="1329" rx="24" ry="13" fill="#d9d04a" />
        <path d="M1468 712L1440 770L1412 1410L1424 1308L1440 1305z" fill="#5b1663" />
        <path d="M977 730L1440 770L1412 1410L1352 1400V1328L977 1265z" fill="#70277a" />
        <path d="M977 730L1052 680L1468 712L1440 770z" fill="#ad3ab8" />
        <path d="M1099 655V725C1130 757 1330 757 1361 732V655z" fill="url(#collar)" />
        <ellipse cx="1231" cy="655" rx="132" ry="22" fill="#8d8c93" />
        <path d="M1115 397L1143 402L1138 662L1112 652z" fill="#2b2a2e" />
        <path d="M1143 402L1296 404L1288 675L1138 662z" fill="#706f7a" />
        <path d="M1296 404L1362 398L1355 655Q1330 672 1288 675z" fill="url(#facet)" />
        <ellipse cx="1239" cy="397" rx="123" ry="10" fill="#8d8c93" />
        <ellipse cx="1236" cy="396" rx="95" ry="8" fill="#8a2a96" stroke="none" />
        <path d="M1294 33L1212 401H1309L1430 103L1439 50V33z" fill="url(#lever-right)" stroke="none" />
        <path d="M1294 33H1436C1442 60 1438 85 1430 103Q1360 75 1294 43z" fill="url(#ball)" stroke="none" />
        <path d="M1294 42L1430 103" fill="none" />

        {/* middle switch */}
        <path d="M660 965L920 868L1083 886L975 1002z" fill="#ad3ab8" />
        <path d="M660 962L975 1002L968 1543H660z" fill="#70277a" />
        <path d="M975 1002L1083 886L1071 1543H968z" fill="#5b1663" />
        <path d="M630 820V955C720 970 900 960 920 912V810z" fill="url(#collar)" />
        <ellipse cx="775" cy="815" rx="146" ry="44" fill="#8d8c93" />
        <path d="M592 467L785 474V854L592 838z" fill="#706f7a" />
        <path d="M785 474L908 464V818Q870 848 785 854z" fill="url(#facet)" />
        <ellipse cx="750" cy="461" rx="158" ry="14" fill="#8d8c93" />
        <ellipse cx="740" cy="460" rx="138" ry="10" fill="#a838b3" />
        <path d="M777 33H986L940 190L840 475L705 468z" fill="url(#lever-middle)" stroke="none" />
        <path d="M925 33L978 55" fill="none" />

        {/* front switch */}
        <path d="M24 1145V1112L215 1010L690 1042L905 1075L715 1280z" fill="#ad3ab8" />
        <path d="M24 1145L715 1280V1543H24z" fill="#70277a" />
        <path d="M715 1280L905 1075L903 1543H715z" fill="#5b1663" />
        <path d="M219 1000L222 1135C260 1228 640 1228 688 1105L687 980z" fill="url(#collar)" />
        <ellipse cx="453" cy="1000" rx="234" ry="74" fill="#8b8a90" />
        <path d="M222 542L232 548L246 1022L238 1015z" fill="#1f1e22" />
        <path d="M230 548L473 563L484 1062L246 1022z" fill="#706f7a" />
        <path d="M473 563L665 533L668 990Q610 1060 484 1062z" fill="url(#facet)" />
        <path d="M222 542C230 500 660 490 665 533C640 570 480 568 230 550z" fill="#8d8c93" />
        <ellipse cx="443" cy="534" rx="192" ry="24" fill="#a233ad" />
        <path d="M457 33H728L565 558Q470 562 390 550z" fill="url(#lever-front)" stroke="none" />
        <path d="M230 549Q400 575 520 560" fill="none" />
      </g>
      <g fill="none" strokeWidth="1.500">
        <path d="M38 558V531" stroke="#2b2bd8" />
        <path d="M38 558L4 556" stroke="#1fa82a" />
        <path d="M38 558L50 553" stroke="#d81f2a" />
      </g>
      <text x="35" y="528" fontSize="8" fill="#2b2bd8" fontFamily="Liberation Sans, sans-serif">
        Z
      </text>
    </svg>
  );
}

function Document() {
  return (
    <main className="flex min-w-0 flex-1 items-center bg-[#989898]">
      <div className="flex aspect-[1544/1194] w-full items-end bg-white">
        <Model />
      </div>
    </main>
  );
}

function RightRail() {
  return (
    <aside className="flex w-[92px] shrink-0 flex-col items-center gap-11 bg-[#fbfbfb] pt-6 pb-[22px]">
      <button type="button" aria-label="Search tools" className="flex w-14 justify-center border-b-2 border-[#cfcfcf] pb-[21px]">
        <Icon>
          <circle cx="21" cy="21" r="15" />
          <path d="M31 32L43 42" strokeWidth="5.500" />
          <path d="M19 14V28L12 21zM23 14V28L30 21z" fill={GRAY} stroke="none" />
        </Icon>
      </button>
      <div className="-mt-[21px] flex flex-col gap-11 pl-0.5">
        {sideTools.map((tool) => (
          <button key={tool.label} type="button" aria-label={tool.label}>
            {tool.icon}
          </button>
        ))}
      </div>
      <button type="button" aria-label="Collapse pane" className="mt-auto flex w-14 justify-center border-t-2 border-[#cfcfcf] pt-[22px]">
        <Icon>
          <path d="M18 8V40" strokeWidth="6" />
          <path d="M23 24H41M33 16L41 24L33 32" />
        </Icon>
      </button>
    </aside>
  );
}

export default function App() {
  return (
    <div className="flex min-h-screen flex-col bg-[#42689a] font-['Liberation_Sans',Arial,sans-serif]">
      <svg className="absolute size-0" aria-hidden="true">
        <defs>
          <linearGradient id="camera-body" x2="0" y2="1">
            <stop offset="0" stopColor="#a9a9a9" />
            <stop offset="1" stopColor="#454545" />
          </linearGradient>
          <radialGradient id="green-ball" cx=".4" cy=".3">
            <stop offset="0" stopColor="#a6f25a" />
            <stop offset="1" stopColor="#35b80a" />
          </radialGradient>
        </defs>
      </svg>
      <div className="h-0.5 w-[31%] bg-[#6b6b69]" />
      <div className="flex flex-1 pr-1">
        <Desktop />
        <div className="flex min-w-0 flex-1 bg-[linear-gradient(135deg,#d9d9d9_24px,#42689a_24px)]">
          <div className="flex min-w-0 flex-1 flex-col overflow-hidden rounded-[20px]">
            <TitleBar />
            <TabBar />
            <Toolbar />
            <div className="flex flex-1">
              <LeftRail />
              <ModelTreePanel />
              <Gutter />
              <Document />
              <div className="w-[30px] shrink-0 border-l-2 border-[#e6e6e6] bg-[#fbfbfb] pt-[3px]">
                <div className="h-3 w-[26px] bg-[#c1c1c1]" />
              </div>
              <Gutter left />
              <RightRail />
            </div>
          </div>
        </div>
      </div>
    </div>
  );
}
